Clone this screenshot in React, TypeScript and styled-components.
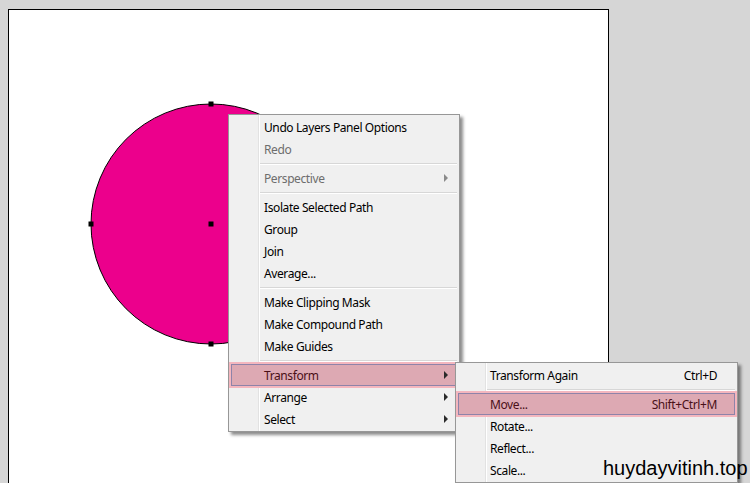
import React from "react";
import styled, { createGlobalStyle, css } from "styled-components";

const Global = createGlobalStyle`
  html, body {
    margin: 0;
    padding: 0;
    background: #d6d6d6;
  }
`;

const Workspace = styled.div`
  position: relative;
  width: 750px;
  height: 483px;
  overflow: hidden;
  background: #d6d6d6;
  font-family: "Noto Sans", "Open Sans", sans-serif;
`;

const Artboard = styled.div`
  margin: 9px 0 0 8px;
  width: 599px;
  height: 520px;
  background: #ffffff;
  border: 1px solid #000000;
`;

const Shape = styled.svg`
  position: absolute;
  left: 88px;
  top: 101px;
`;

const Menu = styled.div<{ $left: number; $top: number; $width: number; $gutter: number }>`
  position: absolute;
  left: ${p => p.$left}px;
  top: ${p => p.$top}px;
  width: ${p => p.$width}px;
  padding: 1px 0;
  border: 1px solid #979797;
  box-shadow: 3px 3px 3px rgba(0, 0, 0, 0.45);
  background: linear-gradient(
    to right,
    #f0f0f0 ${p => p.$gutter}px,
    #e2e2e2 ${p => p.$gutter}px,
    #e2e2e2 ${p => p.$gutter + 1}px,
    #ffffff ${p => p.$gutter + 1}px,
    #ffffff ${p => p.$gutter + 2}px,
    #f0f0f0 ${p => p.$gutter + 2}px
  );
  font-size: 12px;
  letter-spacing: -0.4px;
`;

const Row = styled.div<{ $disabled?: boolean; $active?: boolean; $indent: number }>`
  display: flex;
  align-items: center;
  height: 22px;
  box-sizing: border-box;
  margin: 0 2px;
  padding: 0 18px 0 ${p => p.$indent}px;
  color: ${p => (p.$disabled ? "#6d6d6d" : "#000000")};
  ${p =>
    p.$active &&
    css`
      background: #dda9b3;
      border: 1px solid #8e83a9;
      padding-left: ${p.$indent - 1}px;
      padding-right: 17px;
      box-shadow: 0 0 0 2px #f4b6be;
      color: #4a1018;
      position: relative;
    `}
`;

const Label = styled.span`
  flex: 1;
  white-space: nowrap;
`;

const Shortcut = styled.span`
  white-space: nowrap;
`;

const Arrow = styled.span<{ $disabled?: boolean }>`
  width: 0;
  height: 0;
  margin-right: -9px;
  border-top: 4px solid transparent;
  border-bottom: 4px solid transparent;
  border-left: 4px solid ${p => (p.$disabled ? "#8a8a8a" : "#2a2a2a")};
`;

const Separator = styled.div<{ $gutter: number }>`
  height: 7px;
  display: flex;
  align-items: center;
  margin: 0 2px 0 ${p => p.$gutter + 2}px;
  &::before {
    content: "";
    flex: 1;
    height: 1px;
    background: #d7d7d7;
    border-bottom: 1px solid #ffffff;
  }
`;

const Watermark = styled.div`
  position: absolute;
  left: 603px;
  top: 455px;
  font-family: "Liberation Sans", Arial, sans-serif;
  font-size: 20px;
  line-height: 27px;
  color: #000000;
`;

type Item =
  | { sep: true }
  | { sep?: false; label: string; disabled?: boolean; sub?: boolean; active?: boolean; key?: string };

const mainItems: Item[] = [
  { label: "Undo Layers Panel Options" },
  { label: "Redo", disabled: true },
  { sep: true },
  { label: "Perspective", disabled: true, sub: true },
  { sep: true },
  { label: "Isolate Selected Path" },
  { label: "Group" },
  { label: "Join" },
  { label: "Average..." },
  { sep: true },
  { label: "Make Clipping Mask" },
  { label: "Make Compound Path" },
  { label: "Make Guides" },
  { sep: true },
  { label: "Transform", sub: true, active: true },
  { label: "Arrange", sub: true },
  { label: "Select", sub: true },
];

const subItems: Item[] = [
  { label: "Transform Again", key: "Ctrl+D" },
  { sep: true },
  { label: "Move...", key: "Shift+Ctrl+M", active: true },
  { label: "Rotate..." },
  { label: "Reflect..." },
  { label: "Scale..." },
];

const MenuList: React.FC<{ items: Item[]; gutter: number; indent: number }> = ({ items, gutter, indent }) => (
  <>
    {items.map((it, i) =>
      it.sep ? (
        <Separator key={i} $gutter={gutter} />
      ) : (
        <Row key={i} $disabled={it.disabled} $active={it.active} $indent={indent}>
          <Label>{it.label}</Label>
          {it.key && <Shortcut>{it.key}</Shortcut>}
          {it.sub && <Arrow $disabled={it.disabled} />}
        </Row>
      )
    )}
  </>
);

const Handle: React.FC<{ x: number; y: number }> = ({ x, y }) => (
  <rect x={x - 2.5} y={y - 2.5} width={5} height={5} fill="#000" />
);

export default function App() {
  return (
    <Workspace>
      <Global />
      <Artboard />
      <Shape width={250} height={250} viewBox="0 0 250 250">
        <circle cx={123} cy={123} r={120} fill="#ec008c" stroke="#000" strokeWidth={1} />
        <Handle x={123} y={3} />
        <Handle x={3} y={123} />
        <Handle x={123} y={123} />
        <Handle x={123} y={243} />
      </Shape>
      <Menu $left={228} $top={114} $width={230} $gutter={29}>
        <MenuList items={mainItems} gutter={29} indent={33} />
      </Menu>
      <Menu $left={455} $top={362} $width={281} $gutter={29}>
        <MenuList items={subItems} gutter={29} indent={32} />
      </Menu>
      <Watermark>huydayvitinh.top</Watermark>
    </Workspace>
  );
}
